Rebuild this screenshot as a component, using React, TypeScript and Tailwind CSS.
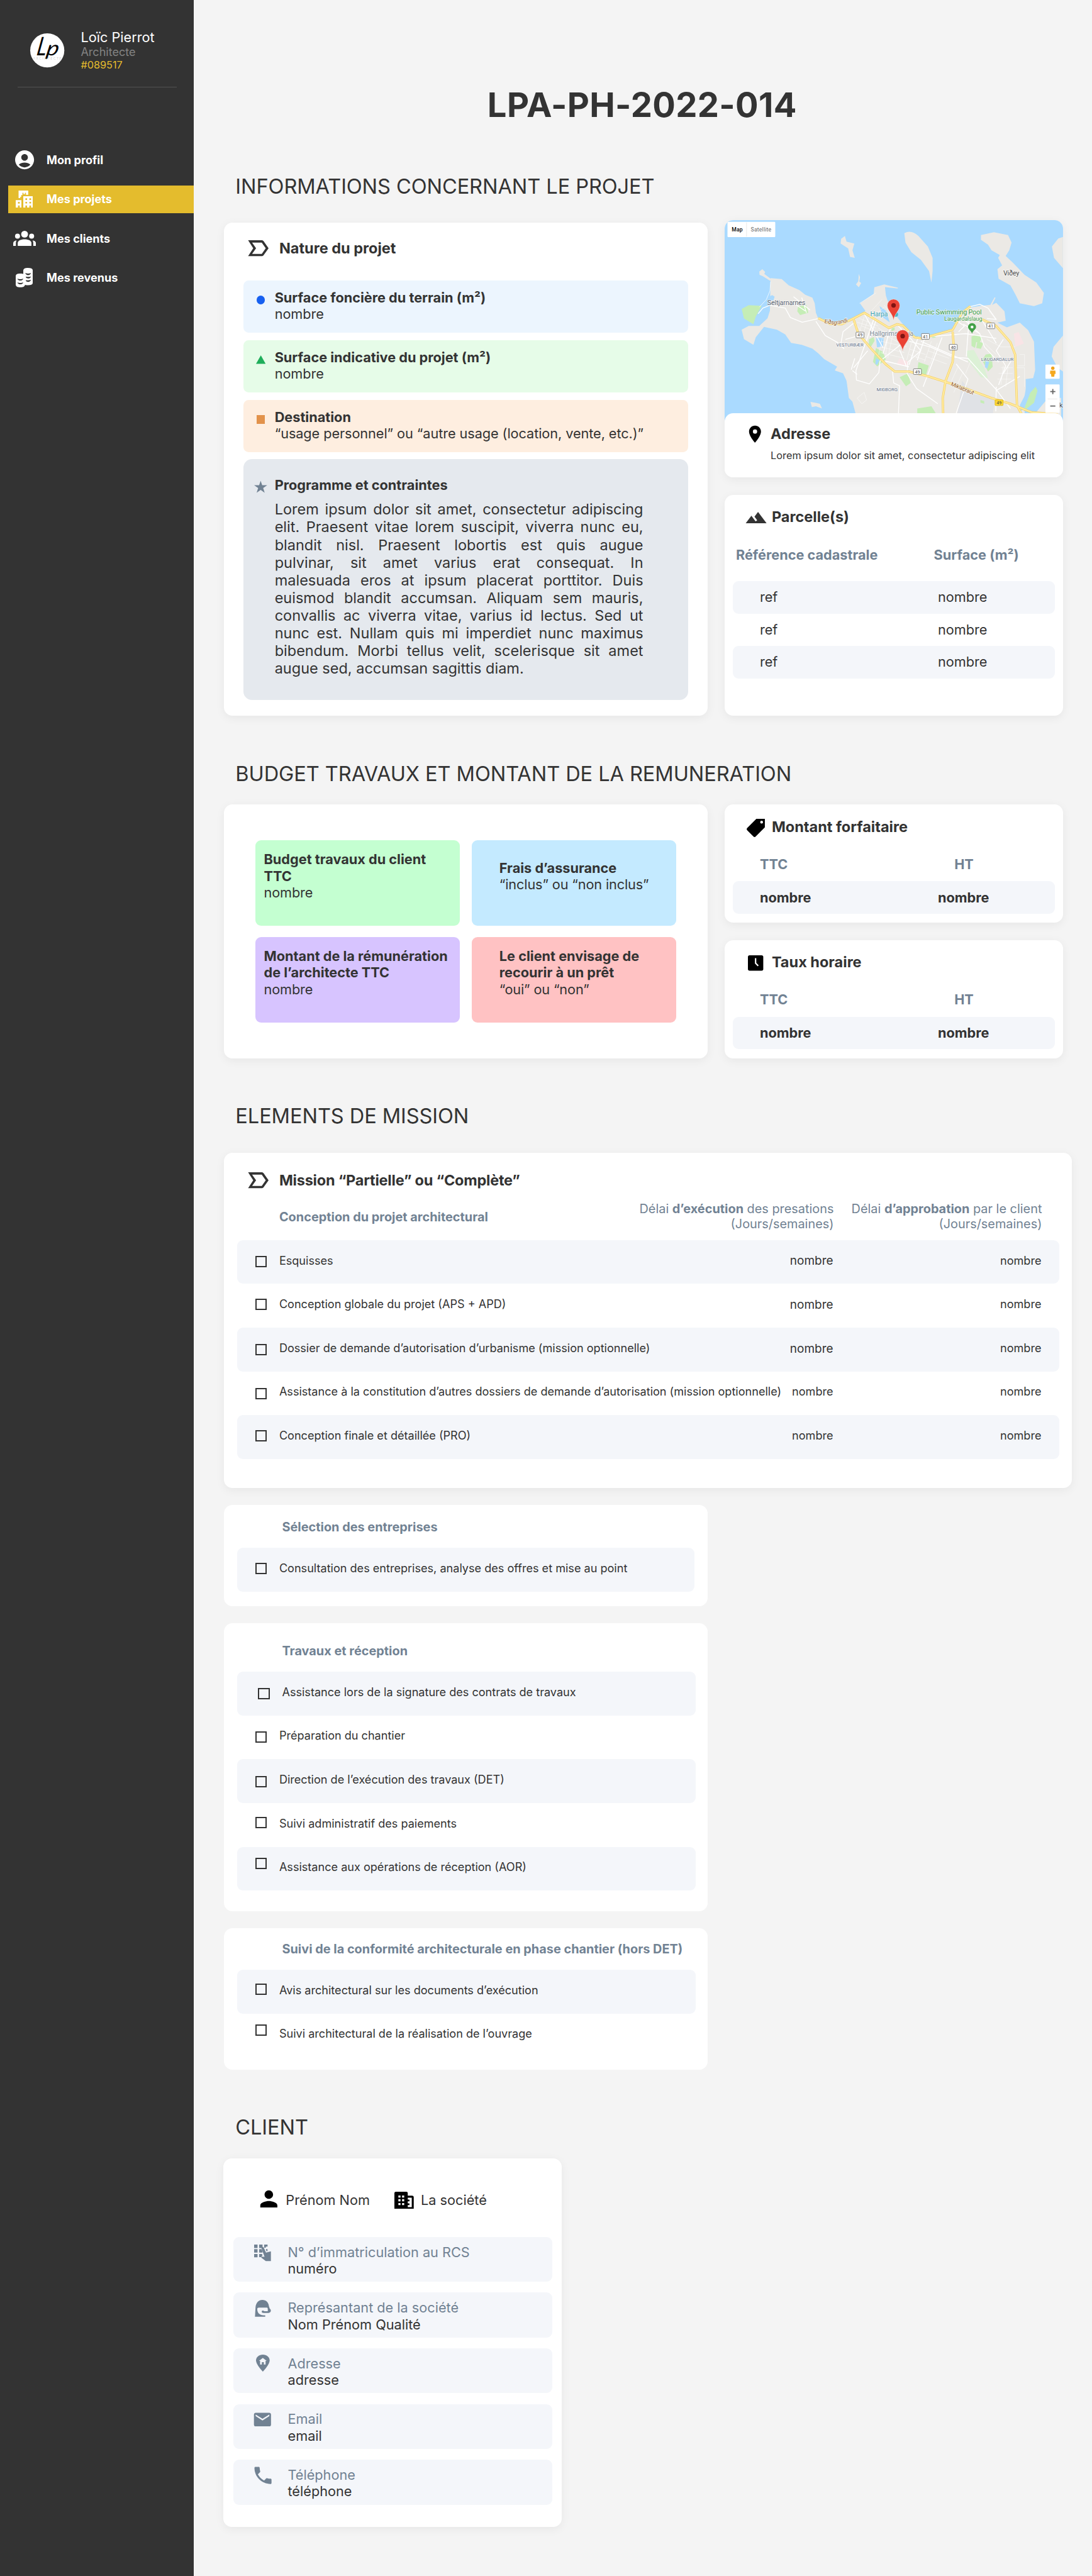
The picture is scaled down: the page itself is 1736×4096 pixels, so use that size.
import type { ReactNode } from "react";
import { MdAccountCircle, MdEmail, MdLocationOn, MdPerson, MdPhone, MdTerrain } from "react-icons/md";

/* ---------- icons ---------- */

function LabelIcon() {
  return (
    <svg viewBox="0 0 24 24" className="h-12 w-12 shrink-0 fill-[#333333]">
      <path d="M15 5H3l4.5 7L3 19h12c.65 0 1.26-.31 1.63-.84L21 12l-4.37-6.16C16.26 5.31 15.65 5 15 5zm0 12H6.5l3.5-5-3.5-5H15l3.5 5-3.5 5z" />
    </svg>
  );
}

function BuildingsIcon() {
  return (
    <svg viewBox="0 0 30 30" className="h-[30px] w-[30px] fill-white" fillRule="evenodd">
      <path d="M5 0h17v7.500h-4V4h-1.800v2.400h-2.600V4h-1.800v4H9.600v3H8v2.400H5z" />
      <path d="M0 17h10v13H7v-3.800H4V30H0zM4 20v3h3v-3z" />
      <path d="M13.300 10H30v20h-3v-3.800h-3V30h-4v-3.800h-3V30h-3.700zM17 13.600v3h3v-3zm7 0v3h3v-3zm-7 6.200v3h3v-3zm7 0v3h3v-3z" />
    </svg>
  );
}

function GroupIcon() {
  return (
    <svg viewBox="0 0 40 27" className="h-[27px] w-10 fill-white">
      <circle cx="20" cy="6" r="6" />
      <circle cx="7.6" cy="9.4" r="4.4" />
      <circle cx="32.4" cy="9.4" r="4.4" />
      <path d="M8 27v-5.500C8 17.500 13 15 20 15s12 2.500 12 6.500V27z" />
      <path d="M0 27v-5c0-2.800 2.600-4.600 6-5-1 1.600-1.300 3-1.300 5v5zM40 27v-5c0-2.800-2.600-4.600-6-5 1 1.600 1.300 3 1.300 5v5z" />
    </svg>
  );
}

function CoinsIcon() {
  return (
    <svg viewBox="0 0 30 34" className="h-[34px] w-[30px]" fill="none">
      <path d="M13.300 5C13.300 1.500 16 0 21.700 0S30 1.500 30 5v21c0 3-2.500 4.500-8.300 4.500s-8.400-1.500-8.400-4.500z" fill="white" />
      <path d="M0 14.500C0 11.500 2.500 10 8 10s8.300 1.500 8.300 4.500V29c0 3.500-2.800 5-8.300 5S0 32.500 0 29z" fill="white" />
      <g fill="#333333">
        <path d="M16.800 8.800c3 1.500 7 1.500 10 0-.6 2.600-2.500 3.800-5 3.800s-4.400-1.200-5-3.800zM18 15.200c2.600.9 6.200.9 8.800-.4-.6 2.600-2.500 3.800-5 3.800-1.700 0-3-.5-3.800-1.600zM18 21.200c2.600.9 6.200.9 8.800-.4-.6 2.600-2.500 3.800-5 3.800-1.700 0-3-.5-3.800-1.600z" />
        <path d="M3 18.800c3 1.500 7 1.500 10.200 0-.6 2.400-2.600 3.400-5.100 3.400s-4.500-1-5.100-3.400zM3 25.500c3 1.500 7 1.500 10.200 0-.6 2.400-2.600 3.400-5.100 3.400s-4.500-1-5.100-3.400z" />
      </g>
    </svg>
  );
}

function TagIcon() {
  return (
    <svg viewBox="0 0 32 32" className="h-8 w-8 fill-black" fillRule="evenodd">
      <path d="M17 0h15v15L16 31c-1.300 1.300-2.900 1.300-4.200 0L1 20.200c-1.300-1.300-1.300-2.900 0-4.200zM26.300 3.300a2.500 2.500 0 1 0 0 5 2.500 2.500 0 0 0 0-5z" />
    </svg>
  );
}

function ClockIcon() {
  return (
    <svg viewBox="0 0 27 27" className="h-[27px] w-[27px]">
      <rect width="27" height="27" rx="3" />
      <path d="M13.500 5v8.800l4.600 4.800" fill="none" stroke="white" strokeWidth="2.4" />
    </svg>
  );
}

function CompanyIcon() {
  return (
    <svg viewBox="0 0 34 30" className="h-[30px] w-[34px]">
      <path d="M0 2.500Q0 0 2.500 0H21q2.500 0 2.500 2.500V7H31q3 0 3 3v20H0z" />
      <g fill="white">
        <path d="M7 6.500h3.700v3.600H7zM13.500 6.500h3.700v3.600h-3.700zM7 13h3.700v3.800H7zM13.500 13h3.700v3.800h-3.700zM7 20h3.700v3.500H7zM13.500 20h3.700v3.500h-3.700z" />
        <path d="M23.500 10.500H30.500V27H23.500V23.500H26.500V20.500H23.500V16.800H26.500V13.700H23.500z" />
      </g>
    </svg>
  );
}

function KeypadIcon() {
  return (
    <svg viewBox="0 0 30 30" className="h-[30px] w-[30px] fill-[#718293]">
      <path d="M0 0h6v6H0zM8.800 0h6v6h-6zM17.600 0h6v3.500h-3v2h-3zM0 8h6v6H0zM8.800 8H13l1.800 4v2h-6zM20.500 8h3v3.500h-1.800zM0 16.500h6v6H0zM8.800 16.500h5l1 2.500-1.800 1.500 1 1.500H8.800z" />
      <path d="M13.800 4.600c1-.9 2.600-.5 3.100.7l4 8.700L29.500 12v17H20.500L12.500 23l1.500-1.800 4.300.3-5.100-14.300c-.4-1-.2-1.900.6-2.600z" />
    </svg>
  );
}

function WomanIcon() {
  return (
    <svg viewBox="0 0 30 30" className="h-[30px] w-[30px] fill-[#718293]">
      <path d="M1.500 29.500 2.500 12.500C3.300 5 8 0 14.500 0 21 0 25.500 4.500 26 11l1.500 4.500c2.500.8 2.500 6 0 6.500l-2 1H17c-3 0-3.600-1-3.600-2.500s1-2 2.600-1.600l2 .9H24V16c0-1.800-.6-2.500-2.200-2.500H8.500c-2 0-3 .8-3 2.800 0 7.200 5 10.700 11 10.700h3v2.500z" />
    </svg>
  );
}

function HomePinIcon() {
  return (
    <svg viewBox="0 0 24 34" className="h-[30px] w-6" preserveAspectRatio="none">
      <path d="M12 0C5.300 0 0 5 0 11.700 0 20 12 34 12 34s12-14 12-22.300C24 5 18.700 0 12 0z" fill="#718293" />
      <path d="M12 6.600l6.800 6h-2v7h-3v-4.600h-3.600v4.600h-3v-7h-2z" fill="#f4f6fa" />
    </svg>
  );
}

/* ---------- map ---------- */

const water = "#aadaff";
const land = "#ebe9e5";

const islands = [
  "M568 135l7 30 33 10-8 35 10 40-20-5-8-45-32-25 2-25z",
  "M820 120Q850 100 880 135l40 55 20 60v70l-5 60-10-60-35-60-40-40-25-50z",
  "M1145 130l55-15 60 15 15 40-10 40-15 30 30 35 50 65 50 40 32 55-7 55-35 15-60-15-20-50-20-45-50-35-5-50 20-20-17-40 7-15-35-25-15-30-30-25z",
  "M1493 140l-20 8-27 42 9 60 38 55zM1493 660l-40 60-8 50 25 60 23 20z",
  "M627 335l5 18-3 22 8 8-10 22-12-15 10-16z",
  "M422 1010l22 5 18 5 9 25-26-12-17 4z",
  "M218 310l12 15-4 10 30 28-5 8-32-25-13-6-1-18z",
];

const mainland =
  "M253 357l47 5 30 33 45 25 25 25 30 15 10 30 5 50 10 30 45 25 60 5 40-28 40-27 15-15-23-40 58-50 3-35 42-15 58 18-1 4-54-8 4 45 8 30 22 50 18 35 20 30 25 35 30 42 65-12 90-21 50-90 25-35 50-10 40-5 18-40 4 3-15 37 18-11 35 45 5 50-35 10 40 25 55-25 35 40 25 60 5 150-10 50-25 20-15 100 10 100 20 22 25-70 40-60 55-15 10 0v250H720l-30-80-50-30-25-50-15-70-15-20-10-90-15-40-35-15 10-20-55-40-25-30-25-25-45-20-45-10-25-45-35-25-55-15-35 55-10 40-40-30-10-50 30-20h45l35-40 10-40z";

const whiteRoads = [
  "M200 545l20-30 30-15 65 15 22 50 50 25 70-20M445 585l40 75 50 35 30 35",
  "M610 590l-50 50-10 70M630 660l-60 20M690 575l-75 270 2 50 55 20 40-60 5-60 90-90",
  "M700 580l-25 90M650 545l80 180M760 625l-30 130M795 610l55 70 40 60-55 60-3 60 40 80 90 80M600 845l20 20M770 850l5 60 25 15-5 150",
  "M740 795l100 30M800 735l30 90M880 665l-40 150M890 690l90 50 110 60M840 690l90 30 90 50M980 670l-80 260M905 680l-30 110",
  "M930 665l150-15 130 25M1095 570l-12 200M1150 580l60 120M1030 775l60 5 50 70 70 95 60 100M1210 930l-2 130M1210 950l100-75M1040 810l50 80-50 180",
  "M1070 600l70 50 20 70 60 80M1090 510l50-15 35 20 35 60-40-5M1240 680l-30 60 40 80-30 100M1280 780l-40 80",
  "M1040 580l35 30-25 30M1060 560l80 90M610 780l-15 60M665 740l-60 90M350 455l70 70M340 480l60 50M385 460l20 80",
];

const thinRoads = [
  "M620 590l80 30M630 570l80 40M640 610l60 30M650 560l-20 80M670 560l-30 110M690 580l-30 110M620 610l40 60M710 620l50 40M730 650l-20 120M750 650l-10 130M770 660l-20 120M720 690l110 30M720 720l100 30M720 750l100 30M740 660l80 50M850 700l-20 90M870 700l-20 90M900 700l-30 80M840 730l70 30M840 760l70 30M935 690l-30 110M960 700l-30 110M920 740l90 40M910 770l90 40",
  "M1050 820l-30 80M1070 850l-40 110M1100 800l-20 60M1170 680l60 40 60 0M1160 700l50 60M1230 830l50 0M1220 860l60 0M1215 890l60 0M1240 820l-10 100M1260 820l-10 110M1290 830h40v100M1310 760h20v60h-30M650 960l-30 30 20 30 20-20-10-40M1180 530l30 50M1110 530l60 60M630 490l70-55M680 530l45-60M700 545l35-35M735 500l30 50",
];

const yellowRoads = [
  "M455 568l50 30 50 2 45-28 50-32 60 45 45 35 35-20 25 8 50 62 30 5 130-45 40-90 35-35",
  "M605 575l20 75 55 80 60 80 40 40 60 0 80 25 150 60 120 55 80 30 90 45 110 10",
  "M1025 640l5 80-5 80-30 100-12 90 2 90M1150 575l60 35 60 85 20 65 8 270 20 45",
];

function Shield({ x, y, children, yellow }: { x: number; y: number; children: string; yellow?: boolean }) {
  return (
    <g>
      <rect x={x - 7} y={y - 5} width="14" height="10" rx="1" fill={yellow ? "#fdd835" : "white"} stroke={yellow ? "#d9b310" : "#777777"} strokeWidth="1" />
      <text x={x} y={y + 3} fontSize="8" textAnchor="middle" fill="#444444">
        {children}
      </text>
    </g>
  );
}

function Marker({ x, y }: { x: number; y: number }) {
  return (
    <g transform={`translate(${x} ${y})`}>
      <path d="M0 0C-1-13-11-17-11-27a11 11 0 0 1 22 0C11-17 1-13 0 0z" fill="#ea4335" stroke="#f3eeee" strokeWidth="0.6" />
      <circle cy="-27" r="4" fill="#811411" />
    </g>
  );
}

function MapView() {
  return (
    <svg viewBox="0 0 595 356" className="block h-[356px] w-[595px]" fontFamily="Roboto, sans-serif">
      <rect width="595" height="356" fill={water} />
      <g transform="scale(0.41455 0.33333) translate(-58 -51)">
        <g fill={land}>
          {islands.map((d) => (
            <path key={d} d={d} />
          ))}
          <path d={mainland} />
        </g>
        <path d="M1065 900l50 70 90 20-10 90h-150z" fill="#e0e2e6" />
        <path d="M130 520l30-20 55 3-25 57-10 40-40-30zM370 505l35-5 8 40-35 12-12-20zM700 725l28 20 14 40-37 38-18-25zM880 800l44 18-12 50-38-10zM800 880l35-20 12 50-20 18zM875 1045l60-12 20 40h-80zM670 680l20-12 4 20-15 30-10-8zM1105 665l20-10 25 15-10 25h-15l-5 30 -15-10zM1130 690l25 10-10 30-20-5zM1165 760l25-5 5 70-20 25-25-60zM767 622l12-5v15l-14 5zM940 655l14-4-2 20-14 2zM1143 1000l16 6v14l-16-6z" fill="#c5edb6" />
        <path d="M1085 740l30-5 45 100 15 50-30-5-55-90z" fill="#dcf1d6" />
        <path d="M1285 650l20-8 22 60-36 18zM800 780l38 18-6 26-44-14z" fill="#f9e4e6" />
        <path d="M700 672l32 0-2 45-26 5zM245 455l15-8 10 8-5 20-15-2zM1165 790l15 10-8 35-10-8zM715 505l28 25 15 60-28-25zM700 780l15 10-10 25-8-5z" fill={water} />
        <path d="M1335 890l45-8 20 50-20 15-30 80-35 30-5-30 25-60z" fill={water} />
        <path d="M1355 960l22-30 8 20-15 65-35 35-5-10z" fill="#c5edb6" />
        <g fill="none" stroke="white">
          {thinRoads.map((d) => (
            <path key={d} d={d} strokeWidth="0.7" strokeOpacity="0.8" vectorEffect="non-scaling-stroke" />
          ))}
          {whiteRoads.map((d) => (
            <path key={d} d={d} strokeWidth="1.5" strokeLinejoin="round" vectorEffect="non-scaling-stroke" />
          ))}
          <path d="M205 510l30-40 15-45 3-50" strokeWidth="0.8" vectorEffect="non-scaling-stroke" />
        </g>
        <g fill="none" strokeLinejoin="round">
          {yellowRoads.map((d) => (
            <path key={d} d={d} stroke="#f6cf65" strokeWidth="4" vectorEffect="non-scaling-stroke" />
          ))}
          {yellowRoads.map((d) => (
            <path key={d} d={d} stroke="#ffeb9f" strokeWidth="2.4" vectorEffect="non-scaling-stroke" />
          ))}
        </g>
      </g>
      <g stroke="white" strokeWidth="1.6" strokeOpacity="0.75" paintOrder="stroke" fill="#5b6470">
        <text x="75" y="149" fontSize="12" textLength="67">Seltjarnarnes</text>
        <text x="490" y="97" fontSize="12" textLength="28" fill="#4a4a4a">Viðey</text>
        <text x="256" y="169" fontSize="12" textLength="31" fill="#3a9fb0">Harpa</text>
        <text x="255" y="203" fontSize="12" textLength="77" fill="#7d8b99">Hallgrimskirkja</text>
        <text x="337" y="166" fontSize="12" textLength="115" fill="#3d9a43">Public Swimming Pool</text>
        <text x="386" y="177" fontSize="10.500" textLength="67" fill="#3d9a43">Laugardalslaug</text>
        <text x="196" y="222" fontSize="8.500" textLength="48" fill="#5f6f88">VESTURBÆR</text>
        <text x="267" y="301" fontSize="8.500" textLength="37" fill="#5f6f88">MIÐBORG</text>
        <text x="451" y="248" fontSize="8.500" textLength="57" fill="#5f6f88">LAUGARDALUR</text>
        <text fontSize="10" fill="#92591f" transform="translate(175 181) rotate(8)" textLength="22">Eiðsg</text>
        <text fontSize="10" fill="#92591f" transform="translate(197 183.500) rotate(-12)" textLength="20">randi</text>
        <text fontSize="10" fill="#92591f" transform="translate(397 291) rotate(22)" textLength="43">Miklabraut</text>
        <text x="588" y="330" fontSize="13" fill="#4a4a4a">k</text>
      </g>
      <Shield x={238} y={202}>49</Shield>
      <Shield x={353} y={204.5}>41</Shield>
      <Shield x={468} y={186}>41</Shield>
      <Shield x={402} y={223.5}>40</Shield>
      <Shield x={339} y={266.5}>49</Shield>
      <Shield x={482.5} y={321} yellow>49</Shield>
      <circle cx="301" cy="166" r="4" fill="#4bb6c4" />
      <path d="M435 200c-1-6-7-7-7-12a7 7 0 0 1 14 0c0 5-6 6-7 12z" fill="#43a047" />
      <circle cx="435" cy="188" r="2.500" fill="white" />
      <Marker x={297} y={177} />
      <Marker x={313} y={231} />
      <rect x="5" y="3" width="84" height="27" rx="1.500" fill="white" />
      <path d="M38.500 4v25" stroke="#e6e6e6" />
      <text x="12.500" y="20" fontSize="9.500" fontWeight="500" textLength="19">Map</text>
      <text x="46" y="20" fontSize="9.500" fill="#666666" textLength="36">Satellite</text>
      <g fill="white">
        <rect x="564" y="254" width="25" height="25" rx="1.500" />
        <rect x="564" y="289" width="25" height="50" rx="1.500" />
      </g>
      <circle cx="577" cy="260.500" r="3" fill="#f0a31c" />
      <path d="M572.500 264.500h9l.5 6h-1.800l-.7 5h-5l-.7-5H572z" fill="#f5a81f" />
      <path d="M568 314.500h17" stroke="#e6e6e6" />
      <path d="M572.500 301.500h9M577 297v9M572.500 327h9" stroke="#666666" strokeWidth="2" fill="none" />
    </svg>
  );
}

/* ---------- building blocks ---------- */

function Card({ className, children, flat }: { className: string; children: ReactNode; flat?: boolean }) {
  return (
    <section className={`rounded-[15px] bg-white ${flat ? "" : "shadow-[0_4px_16px_rgba(0,0,0,0.055)]"} ${className}`}>
      {children}
    </section>
  );
}

function SectionTitle({ children, className }: { children: string; className: string }) {
  return (
    <h2 className={`ml-[73px] text-[36px] leading-[44px] tracking-[-0.08px] whitespace-nowrap ${className}`}>{children}</h2>
  );
}

function CardTitle({ children }: { children: string }) {
  return <h3 className="text-[26px] leading-[31px] font-bold whitespace-nowrap">{children}</h3>;
}

function InfoRow({ color, icon, title, value }: { color: string; icon: ReactNode; title: string; value: string }) {
  return (
    <div className={`flex h-[92px] gap-[17px] rounded-[9px] pt-4 pl-[23px] text-2xl leading-[29px] whitespace-nowrap ${color}`}>
      <div className="mt-[11px] w-[15px] shrink-0">{icon}</div>
      <div>
        <p className="font-bold">{title}</p>
        <p className="tracking-[-0.08px]">{value}</p>
      </div>
    </div>
  );
}

function BudgetBox({ className, title, value }: { className: string; title: string; value: string }) {
  return (
    <div className={`h-[150px] rounded-[10px] text-2xl leading-[29px] ${className}`}>
      <p className="font-bold">{title}</p>
      <p className="tracking-[-0.15px]">{value}</p>
    </div>
  );
}

function PriceCard({ icon, title }: { icon: ReactNode; title: string }) {
  return (
    <Card className="h-[208px]">
      <div className="flex h-[90px] pt-6">
        <div className="ml-[38px] flex h-[34px] w-[34px] items-center justify-center">{icon}</div>
        <div className="ml-[11px]">
          <CardTitle>{title}</CardTitle>
        </div>
      </div>
      <div className="flex h-[45px] pl-[62px] text-2xl leading-[29px] font-bold text-[#718293]">
        <p className="w-[342px]">TTC</p>
        <p>HT</p>
      </div>
      <div className="ml-[15px] flex h-[57px] w-[566px] items-center rounded-[10px] bg-[#f4f6fa] pl-[47px] text-2xl font-bold">
        <p className="w-[313px]">nombre</p>
        <p>nombre</p>
      </div>
    </Card>
  );
}

function Checkbox({ className }: { className: string }) {
  return <span className={`h-5 w-5 shrink-0 border-[2.3px] border-[#333333] ${className}`} />;
}

type Task = { label: string; box: string; row?: string };

function TaskRow({ task, shaded, children }: { task: Task; shaded: boolean; children?: ReactNode }) {
  return (
    <div className={`flex h-[77px] rounded-[10px] text-xl leading-6 whitespace-nowrap ${task.row ?? "pl-8"} ${shaded ? "bg-[#f4f6fa]" : ""}`}>
      <Checkbox className={task.box} />
      <p className={`mt-6 ml-[22px] ${children ? "w-[894px] shrink-0" : ""}`}>{task.label}</p>
      {children}
    </div>
  );
}

function TaskCard({ className, title, tasks, width }: { className: string; title: string; tasks: Task[]; width: string }) {
  return (
    <Card flat className={`mt-[30px] ml-[53px] w-[850px] ${className}`}>
      <h4 className="mb-[22.5px] ml-[102px] text-[22px] leading-[27px] font-bold whitespace-nowrap text-[#718293]">{title}</h4>
      <div className={`ml-[23px] ${width}`}>
        {tasks.map((t, i) => (
          <TaskRow key={t.label} task={t} shaded={i % 2 === 0} />
        ))}
      </div>
    </Card>
  );
}

/* ---------- data ---------- */

const missions: Task[] = [
  { label: "Esquisses", box: "mt-[28px]" },
  { label: "Conception globale du projet (APS + APD)", box: "mt-[26px]" },
  { label: "Dossier de demande d’autorisation d’urbanisme (mission optionnelle)", box: "mt-[29px]" },
  { label: "Assistance à la constitution d’autres dossiers de demande d’autorisation (mission optionnelle)", box: "mt-[29px]" },
  { label: "Conception finale et détaillée (PRO)", box: "mt-[26px]" },
];

const selection: Task[] = [
  { label: "Consultation des entreprises, analyse des offres et mise au point", box: "mt-[26px]" },
];

const works: Task[] = [
  { label: "Assistance lors de la signature des contrats de travaux", box: "mt-[29px]", row: "pl-[37px]" },
  { label: "Préparation du chantier", box: "mt-[28px]" },
  { label: "Direction de l’exécution des travaux (DET)", box: "mt-[29px]" },
  { label: "Suivi administratif des paiements", box: "mt-[24px]" },
  { label: "Assistance aux opérations de réception (AOR)", box: "mt-[19px]" },
];

const followUp: Task[] = [
  { label: "Avis architectural sur les documents d’exécution", box: "mt-[24px]" },
  { label: "Suivi architectural de la réalisation de l’ouvrage", box: "mt-[19px]" },
];

const nav = [
  { label: "Mon profil", icon: <MdAccountCircle className="h-10 w-10" />, active: false },
  { label: "Mes projets", icon: <BuildingsIcon />, active: true },
  { label: "Mes clients", icon: <GroupIcon />, active: false },
  { label: "Mes revenus", icon: <CoinsIcon />, active: false },
];

const contact = [
  { label: "N° d’immatriculation au RCS", value: "numéro", icon: <KeypadIcon />, pad: "pt-[13px]" },
  { label: "Représantant de la société", value: "Nom Prénom Qualité", icon: <WomanIcon />, pad: "pt-[13px]" },
  { label: "Adresse", value: "adresse", icon: <HomePinIcon />, pad: "pt-[11px]" },
  { label: "Email", value: "email", icon: <MdEmail className="-mt-[6px] h-9 w-9 shrink-0" />, pad: "pt-[15px]" },
  { label: "Téléphone", value: "téléphone", icon: <MdPhone className="-mt-[5px] h-10 w-10 shrink-0" />, pad: "pt-[13px]" },
];

/* ---------- page ---------- */

function Logo() {
  return (
    <svg viewBox="0 0 60 60" className="mt-[59px] h-[60px] w-[60px] shrink-0 overflow-visible" fontFamily="Lato, sans-serif">
      <circle cx="30" cy="30" r="30" fill="white" />
      <text x="5" y="47" fontSize="6" fontWeight="300" fill="#a8a8a8" textLength="50">
        ARCHITECTE
      </text>
      <text fontSize="45" fontStyle="italic" fill="black" transform="translate(10 38.500) skewX(-10) scale(0.8 1)">
        L
      </text>
      <text fontSize="36" fontStyle="italic" fill="black" transform="translate(27 38.500) skewX(-10) scale(1.150 1)">
        p
      </text>
    </svg>
  );
}

function Sidebar() {
  return (
    <aside className="w-[341px] shrink-0 bg-[#333333] text-white">
      <div className="ml-[31px] flex h-[154px] w-[280px] border-b border-[#525252] pl-[22px]">
        <Logo />
        <div className="mt-[51px] ml-[29px] whitespace-nowrap">
          <p className="text-2xl leading-[29px]">Loïc Pierrot</p>
          <p className="text-xl leading-6 text-[#828282]">Architecte</p>
          <p className="text-lg leading-[22px] text-[#e4bc2d]">#089517</p>
        </div>
      </div>
      <nav className="mt-[103px] ml-[14px] flex flex-col gap-5">
        {nav.map((n) => (
          <a key={n.label} className={`flex h-[49px] items-center pl-[9px] text-xl font-bold ${n.active ? "bg-[#e4bc2d]" : ""}`}>
            <span className="flex w-10 justify-center">{n.icon}</span>
            <span className="ml-[19px]">{n.label}</span>
          </a>
        ))}
      </nav>
    </aside>
  );
}

function ProjectInfo() {
  return (
    <div className="mt-[37px] ml-[53px] flex gap-[30px]">
      <Card className="mt-1 h-[868px] w-[850px]">
        <div className="flex items-center gap-[13px] pt-[22px] pl-9">
          <LabelIcon />
          <CardTitle>Nature du projet</CardTitle>
        </div>
        <div className="mt-8 ml-[34px] flex w-[782px] flex-col gap-[13px]">
          <InfoRow
            color="bg-[#ecf5fe]"
            icon={<div className="h-[15px] w-[15px] rounded-full bg-[#1760f0]" />}
            title="Surface foncière du terrain (m²)"
            value="nombre"
          />
          <InfoRow
            color="bg-[#e6fce8]"
            icon={
              <svg viewBox="0 0 17 15" className="-ml-px h-[15px] w-[17px] fill-[#1fae5a]">
                <path d="M8.500 0L17 15H0z" />
              </svg>
            }
            title="Surface indicative du projet (m²)"
            value="nombre"
          />
          <InfoRow
            color="bg-[#feeee0]"
            icon={<div className="h-[15px] w-[15px] bg-[#e2924b]" />}
            title="Destination"
            value="“usage personnel” ou “autre usage (location, vente, etc.)”"
          />
          <div className="flex h-[423px] rounded-[15px] bg-[#e5e9ee] pt-[31px] pl-[19px]">
            <svg viewBox="0 0 24 22" className="mt-[6px] h-[22px] w-[23px] shrink-0 fill-[#718293]">
              <path d="M12 0l2.800 8.300H24l-7.400 5.200L19.400 22 12 16.800 4.600 22l2.800-8.500L0 8.300h9.200z" />
            </svg>
            <div className="ml-[13px] w-[648px]">
              <p className="text-2xl leading-[29px] font-bold">Programme et contraintes</p>
              <p className="mt-[13px] text-justify text-[26px] leading-[31px]">
                Lorem ipsum dolor sit amet, consectetur adipiscing elit. Praesent vitae lorem suscipit, viverra nunc eu, blandit
                nisl. Praesent lobortis est quis augue pulvinar, sit amet varius erat consequat. In malesuada eros at ipsum
                placerat porttitor. Duis euismod blandit accumsan. Aliquam sem mauris, convallis ac viverra vitae, varius id
                lectus. Sed ut nunc est. Nullam quis mi imperdiet nunc maximus bibendum. Morbi tellus velit, scelerisque sit amet
                augue sed, accumsan sagittis diam.
              </p>
            </div>
          </div>
        </div>
      </Card>

      <div className="flex w-[595px] flex-col gap-[30px]">
        <Card className="h-[453px] overflow-hidden">
          <MapView />
          <div className="relative -mt-4 h-[113px] rounded-t-[15px] bg-white">
            <div className="flex pt-[18px] pl-9">
              <MdLocationOn className="h-9 w-9 text-black" />
              <div className="mt-[3px] ml-[9px]">
                <CardTitle>Adresse</CardTitle>
                <p className="mt-[12px] text-lg leading-[22px] whitespace-nowrap">
                  Lorem ipsum dolor sit amet, consectetur adipiscing elit
                </p>
              </div>
            </div>
          </div>
        </Card>

        <Card className="h-[389px]">
          <div className="flex h-[91px] items-start pt-5 pl-9">
            <MdTerrain className="h-10 w-10" />
            <div className="mt-1 ml-[7px]">
              <CardTitle>Parcelle(s)</CardTitle>
            </div>
          </div>
          <div className="flex h-[61px] pl-5 text-2xl leading-[29px] font-bold text-[#718293]">
            <p className="w-[348px]">Référence cadastrale</p>
            <p>Surface (m²)</p>
          </div>
          {[0, 1, 2].map((i) => (
            <div
              key={i}
              className={`ml-[15px] flex h-[57px] w-[566px] items-center rounded-[10px] pl-[47px] text-2xl ${i % 2 === 0 ? "bg-[#f4f6fa]" : ""}`}
            >
              <p className="w-[313px]">ref</p>
              <p>nombre</p>
            </div>
          ))}
        </Card>
      </div>
    </div>
  );
}

function Budget() {
  return (
    <div className="mt-8 ml-[53px] flex gap-[30px]">
      <Card className="h-[446px] w-[850px] pt-[63px] pl-[55px]">
        <div className="grid w-[740px] grid-cols-2 gap-5">
          <BudgetBox className="bg-[#c4ffd1] pt-[19px] pr-[15px] pl-[15px]" title="Budget travaux du client TTC" value="nombre" />
          <BudgetBox className="bg-[#c4eaff] pt-[33.5px] pl-[49px]" title="Frais d’assurance" value="“inclus” ou “non inclus”" />
          <BudgetBox className="bg-[#d7c4ff] pt-[19px] pr-[15px] pl-[15px]" title="Montant de la rémunération de l’architecte TTC" value="nombre" />
          <BudgetBox className="bg-[#ffc2c3] pt-[19px] pr-[40px] pl-[49px]" title="Le client envisage de recourir à un prêt" value="“oui” ou “non”" />
        </div>
      </Card>
      <div className="flex w-[595px] flex-col gap-[30px]">
        <PriceCard icon={<TagIcon />} title="Montant forfaitaire" />
        <PriceCard icon={<ClockIcon />} title="Taux horaire" />
      </div>
    </div>
  );
}

function Missions() {
  return (
    <Card className="mt-[42px] ml-[53px] h-[590px] w-[1491px]">
      <div className="flex items-center gap-[13px] pt-[25px] pl-9">
        <LabelIcon />
        <div className="tracking-[-0.25px]">
          <CardTitle>Mission “Partielle” ou “Complète”</CardTitle>
        </div>
      </div>
      <div className="mt-3 mb-[15px] ml-[97px] flex text-[22px] leading-[27px] whitespace-nowrap text-[#718293]">
        <p className="mt-[14.5px] w-[520px] font-bold">Conception du projet architectural</p>
        <p className="w-[455px] text-right">
          Délai <b>d’exécution</b> des presations
          <br />
          (Jours/semaines)
        </p>
        <p className="w-[366px] text-right">
          Délai <b>d’approbation</b> par le client
          <br />
          (Jours/semaines)
        </p>
      </div>
      <div className="ml-[23px] w-[1446px]">
        {missions.map((m, i) => (
          <TaskRow key={m.label} task={m} shaded={i % 2 === 0}>
            <p className={`w-20 text-right ${i < 3 ? "mt-[25px] text-[21px]" : "mt-6"}`}>nombre</p>
            <p className="mt-6 w-[366px] text-right">nombre</p>
          </TaskRow>
        ))}
      </div>
    </Card>
  );
}

function Client() {
  return (
    <Card className="mt-8 ml-[52px] h-[648px] w-[595px]">
      <div className="flex h-[138px] items-start pl-[57.5px] text-2xl leading-[29px] whitespace-nowrap">
        <MdPerson className="mt-[48.5px] h-[45px] w-[45px] text-black" />
        <p className="mt-[58px] ml-[7px] w-[191.5px]">Prénom Nom</p>
        <div className="mt-[58px] w-[46px]">
          <CompanyIcon />
        </div>
        <p className="mt-[58px]">La société</p>
      </div>
      <div className="ml-[17px] flex w-[561px] flex-col gap-[19px]">
        {contact.map((c) => (
          <div key={c.label} className="flex h-[79px] rounded-[10px] bg-[#f4f6fa] pl-[37px] text-2xl leading-[29px]">
            <div className={`flex w-[30px] items-start justify-center text-[#718293] ${c.pad}`}>{c.icon}</div>
            <div className="mt-3 ml-[29px]">
              <p className="text-[#718293]">{c.label}</p>
              <p>{c.value}</p>
            </div>
          </div>
        ))}
      </div>
    </Card>
  );
}

export default function App() {
  return (
    <div className="flex h-[4531px] w-[1920px] overflow-hidden bg-[#f4f4f4] font-['Inter',sans-serif] text-[#333333] [zoom:0.904167]">
      <Sidebar />
      <main className="w-[1579px]">
        <h1 className="mt-[147px] ml-[516px] text-[60px] leading-[73px] font-bold tracking-[0.4px] whitespace-nowrap">
          LPA-PH-2022-014
        </h1>
        <SectionTitle className="mt-[86px]">INFORMATIONS CONCERNANT LE PROJET</SectionTitle>
        <ProjectInfo />
        <SectionTitle className="mt-20">BUDGET TRAVAUX ET MONTANT DE LA REMUNERATION</SectionTitle>
        <Budget />
        <SectionTitle className="mt-20">ELEMENTS DE MISSION</SectionTitle>
        <Missions />
        <TaskCard className="h-[178px] pt-[25.5px]" title="Sélection des entreprises" tasks={selection} width="w-[804px]" />
        <TaskCard className="h-[506px] pt-[35.5px]" title="Travaux et réception" tasks={works} width="w-[806px]" />
        <TaskCard
          className="h-[249px] pt-[23.5px]"
          title="Suivi de la conformité architecturale en phase chantier (hors DET)"
          tasks={followUp}
          width="w-[806px]"
        />
        <SectionTitle className="mt-20">CLIENT</SectionTitle>
        <Client />
      </main>
    </div>
  );
}
